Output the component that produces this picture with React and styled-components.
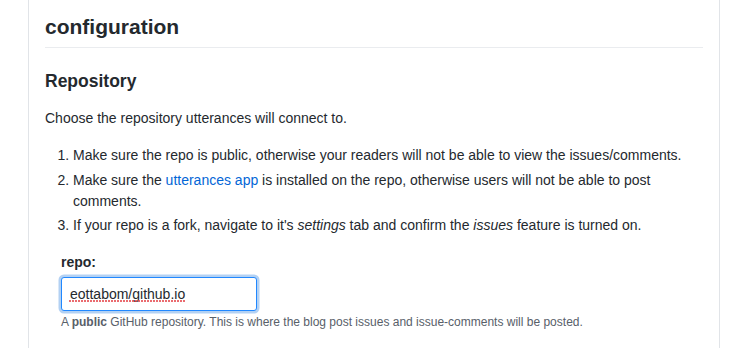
import React from 'react'
import styled, { createGlobalStyle } from 'styled-components'

const GlobalStyle = createGlobalStyle`
  html, body {
    margin: 0;
    padding: 0;
    background: #fff;
  }
  body {
    font-family: "Liberation Sans", Arial, Helvetica, sans-serif;
    font-size: 14px;
    line-height: 1.5;
    color: #24292e;
  }
`

const Card = styled.article`
  box-sizing: border-box;
  width: 692px;
  margin: 0 auto;
  padding: 14px 16px 20px;
  border-left: 1px solid #e1e4e8;
  border-right: 1px solid #e1e4e8;
  min-height: 348px;
`

const Title = styled.h2`
  margin: 0 0 16px;
  padding-bottom: 0.3em;
  font-size: 21px;
  line-height: 1.25;
  font-weight: 600;
  border-bottom: 1px solid #eaecef;
`

const Section = styled.h3`
  margin: 23px 0 16px;
  font-size: 17.5px;
  line-height: 1.25;
  font-weight: 600;
`

const Para = styled.p`
  margin: 0 0 16px;
`

const Steps = styled.ol`
  margin: 0 0 16px;
  padding-left: 2em;

  li + li {
    margin-top: 0.25em;
  }
`

const Link = styled.a`
  color: #0366d6;
  text-decoration: none;
`

const Field = styled.div`
  padding-left: 16px;
`

const Label = styled.label`
  display: block;
  font-weight: 600;
  margin-bottom: 4px;
`

const InputWrap = styled.div`
  position: relative;
  width: 196px;
`

const TextInput = styled.input`
  box-sizing: border-box;
  display: block;
  width: 100%;
  height: 34px;
  padding: 6px 8px;
  font-family: inherit;
  font-size: 14px;
  line-height: 20px;
  color: #24292e;
  background: #fff;
  border: 1px solid #2188ff;
  border-radius: 3px;
  outline: none;
  box-shadow: 0 0 0 2.5px rgba(3, 102, 214, 0.3);
`

/* spell-check squiggle drawn under the typed value */
const Squiggle = styled.span`
  position: absolute;
  left: 8px;
  top: 23px;
  width: ${p => p.$width}px;
  height: 2px;
  pointer-events: none;
  background-image:
    linear-gradient(135deg, transparent 40%, #e5484d 40%, #e5484d 60%, transparent 60%),
    linear-gradient(45deg, transparent 40%, #e5484d 40%, #e5484d 60%, transparent 60%);
  background-size: 3px 2px;
  background-repeat: repeat-x;
  opacity: 0.8;
`

const Note = styled.p`
  margin: 2px 0 2px;
  font-size: 12px;
  line-height: 1.5;
  color: #586069;

  strong {
    font-weight: 600;
  }
`

export default function App() {
  return (
    <>
      <GlobalStyle />
      <Card>
        <Title>configuration</Title>
        <Section>Repository</Section>
        <Para>Choose the repository utterances will connect to.</Para>
        <Steps>
          <li>Make sure the repo is public, otherwise your readers will not be able to view the issues/comments.</li>
          <li>
            Make sure the <Link href="#">utterances app</Link> is installed on the repo, otherwise users will not be able to post comments.
          </li>
          <li>
            If your repo is a fork, navigate to it's <em>settings</em> tab and confirm the <em>issues</em> feature is turned on.
          </li>
        </Steps>
        <Field>
          <Label htmlFor="repo">repo:</Label>
          <InputWrap>
            <TextInput id="repo" type="text" defaultValue="eottabom/github.io" spellCheck={false} />
            <Squiggle $width={116} />
          </InputWrap>
          <Note>
            A <strong>public</strong> GitHub repository. This is where the blog post issues and issue-comments will be posted.
          </Note>
        </Field>
      </Card>
    </>
  )
}
